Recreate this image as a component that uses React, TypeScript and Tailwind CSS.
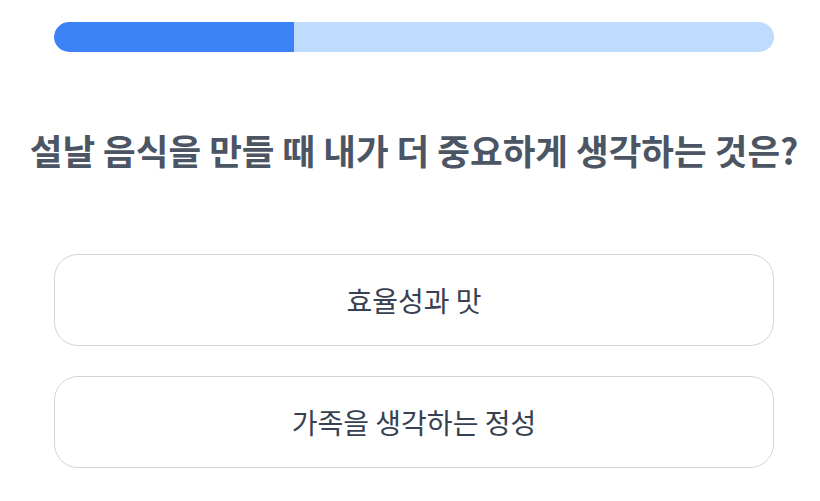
import React from "react";

export default function App() {
  const font = { fontFamily: '"Noto Sans CJK KR", "Noto Sans", sans-serif' };
  return (
    <div className="w-[820px] h-[501px] bg-white overflow-hidden" style={font}>
      <div className="pl-[54px] pr-[46px] pt-[22px]">
        <div className="h-[30px] w-full rounded-full bg-[#bfdbfe] overflow-hidden flex">
          <div className="h-full w-1/3 bg-[#3b82f6] rounded-l-full" />
        </div>
        <div className="h-[202px] flex items-center justify-center">
          <h1 className="whitespace-nowrap text-[35.5px] font-bold text-[#4b5563] leading-none -mt-[6px]">
            설날 음식을 만들 때 내가 더 중요하게 생각하는 것은?
          </h1>
        </div>
        <div className="flex flex-col gap-[30px]">
          <button className="h-[92px] w-full rounded-[24px] border border-[#d1d5db] bg-white text-[28px] text-[#374151]">
            효율성과 맛
          </button>
          <button className="h-[92px] w-full rounded-[24px] border border-[#d1d5db] bg-white text-[28px] text-[#374151]">
            가족을 생각하는 정성
          </button>
        </div>
      </div>
    </div>
  );
}
